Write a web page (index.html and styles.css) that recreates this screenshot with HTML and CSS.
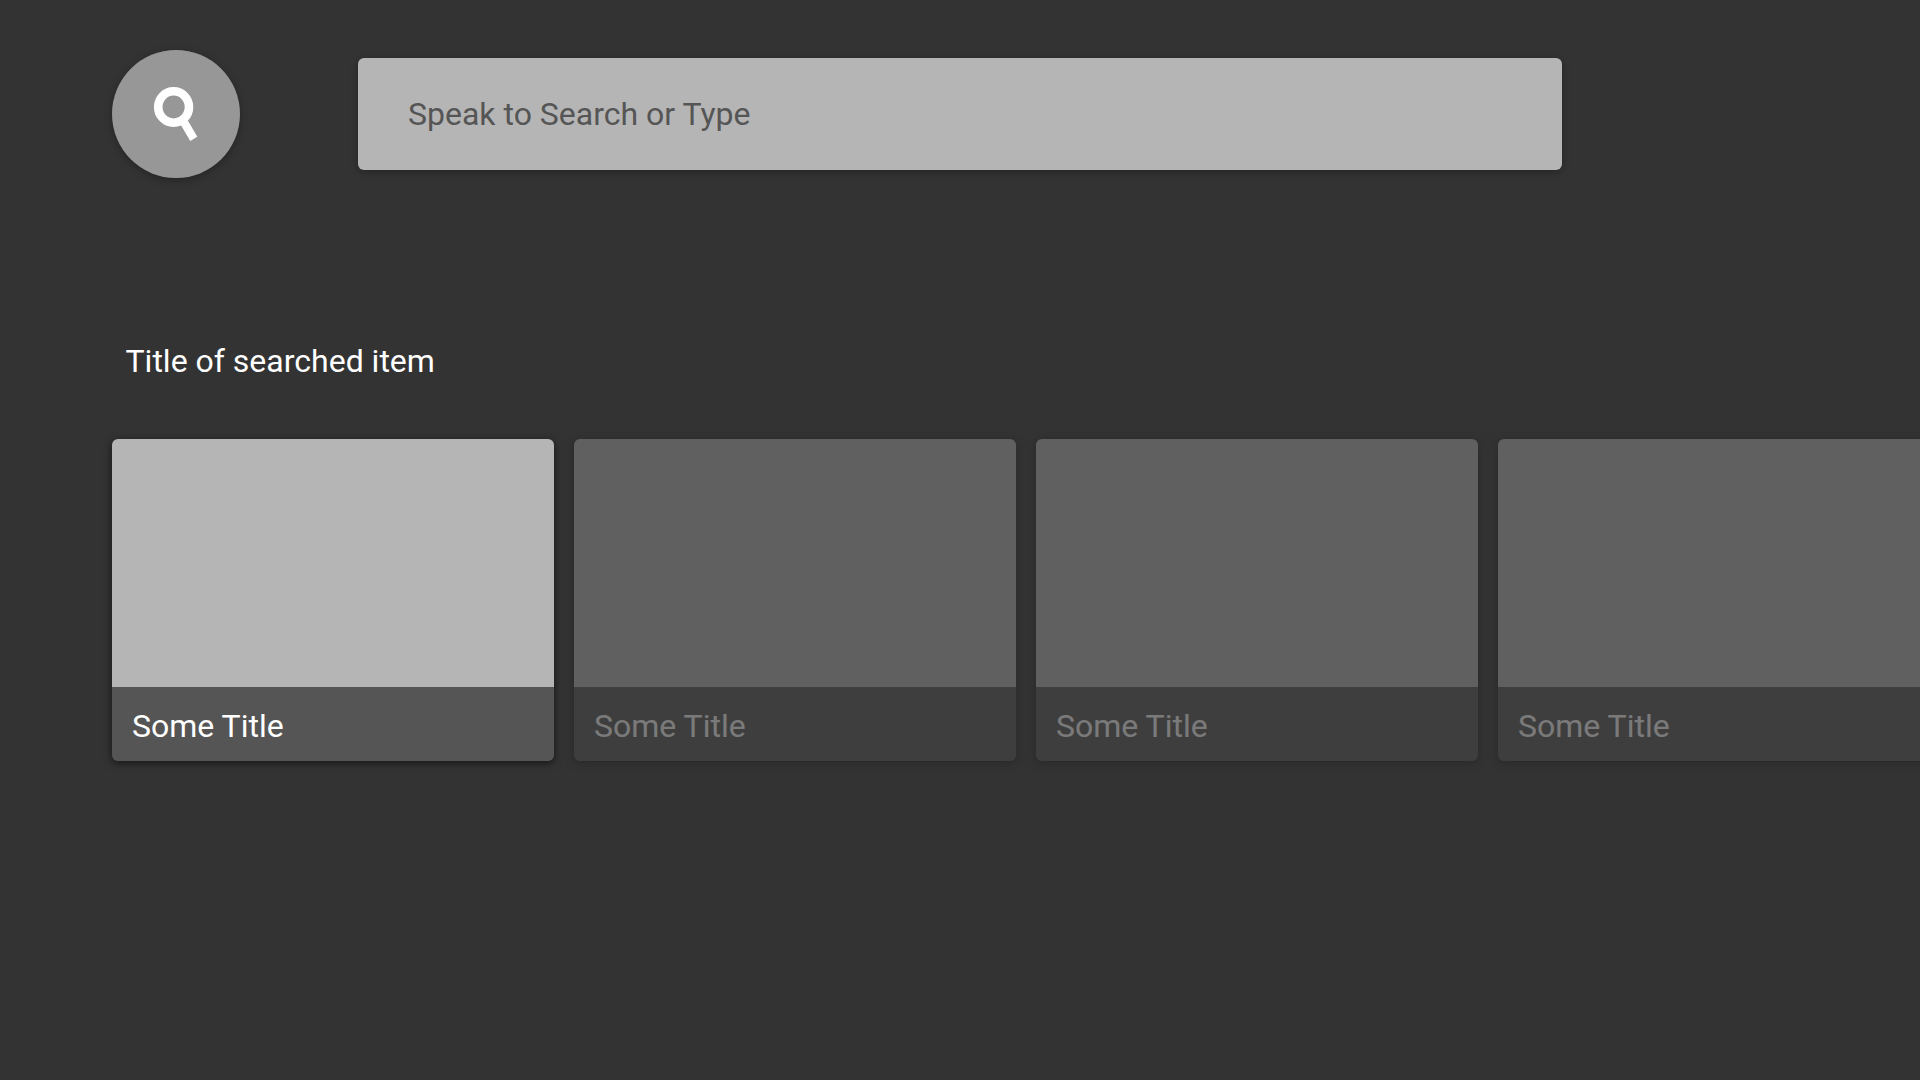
FILE: index.html
```html
<!DOCTYPE html>
<html lang="en">
<head>
    <meta charset="UTF-8">
    <meta name="viewport" content="width=device-width, initial-scale=1.0">
    <title>Search</title>
    <link rel="stylesheet" href="styles.css">
</head>
<body>

<!-- Search bar -->
<header class="search">
    <button class="search-button" aria-label="Search">
        <svg viewBox="0 0 128 128" fill="none" stroke="#fff">
            <ellipse cx="61.6" cy="57" rx="15.4" ry="15.7" stroke-width="8.6"/>
            <path d="M70.5 69.6L81.8 88.8" stroke-width="8.2"/>
        </svg>
    </button>
    <div class="search-field">Speak to Search or Type</div>
</header>

<!-- Results -->
<main>
    <h2 class="row-title">Title of searched item</h2>
    <div class="cards">
        <div class="card active">
            <div class="card-image"></div>
            <p class="card-title">Some Title</p>
        </div>
        <div class="card">
            <div class="card-image"></div>
            <p class="card-title">Some Title</p>
        </div>
        <div class="card">
            <div class="card-image"></div>
            <p class="card-title">Some Title</p>
        </div>
        <div class="card">
            <div class="card-image"></div>
            <p class="card-title">Some Title</p>
        </div>
    </div>
</main>

</body>
</html>
```

FILE: styles.css
```css
* {
    box-sizing: border-box;
}

body {
    margin: 0;
    height: 100vh;
    padding: 50px 0 0 112px;
    background-color: #333;
    color: #fff;
    font-family: Roboto, Arial, sans-serif;
    font-size: 32px;
    line-height: 38px;
    overflow: hidden;
}

.search {
    display: flex;
    align-items: center;
    gap: 118px;
}

.search-button {
    width: 128px;
    height: 128px;
    padding: 0;
    border: none;
    border-radius: 50%;
    background-color: #979797;
    box-shadow: 0 2px 8px rgba(0, 0, 0, 0.3);
    cursor: pointer;
}

.search-button svg {
    display: block;
}

.search-field {
    display: flex;
    align-items: center;
    width: 1204px;
    height: 112px;
    padding: 0 50px;
    border-radius: 6px;
    background-color: #b5b5b5;
    color: #555;
    box-shadow: 0 2px 8px rgba(0, 0, 0, 0.3);
}

.row-title {
    margin: 164px 0 59px 13.5px;
    font-size: 32px;
    font-weight: 400;
}

.cards {
    display: flex;
    gap: 20px;
}

/* Cards out of focus are dimmed */
.card {
    flex: none;
    width: 442px;
    border-radius: 6px;
    overflow: hidden;
    opacity: 0.35;
    box-shadow: 0 2px 8px rgba(0, 0, 0, 0.6);
}

.card.active {
    opacity: 1;
}

.card-image {
    height: 248px;
    background-color: #b5b5b5;
}

.card-title {
    height: 74px;
    margin: 0;
    padding: 20px 20px 0;
    background-color: #555;
}
```
